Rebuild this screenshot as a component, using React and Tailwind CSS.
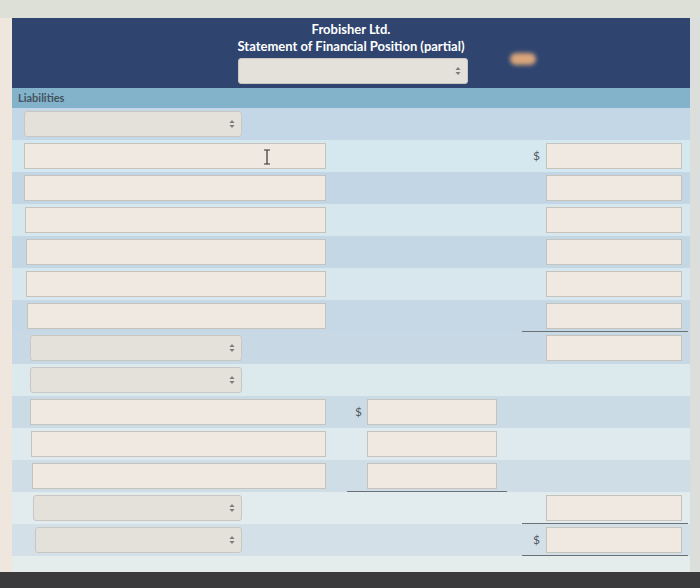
import React from "react";

const rows = [
  { bg: "bg-[#c3d7e6]", pl: "pl-[12px]", a: "select" },
  { bg: "bg-[#d5e7ef]", pl: "pl-[12px]", a: "input", c: { dollar: true }, cursor: true },
  { bg: "bg-[#c2d6e5]", pl: "pl-[12px]", a: "input", c: {} },
  { bg: "bg-[#d6e7ee]", pl: "pl-[13px]", a: "input", c: {} },
  { bg: "bg-[#c4d7e5]", pl: "pl-[14px]", a: "input", c: {} },
  { bg: "bg-[#d7e7ed]", pl: "pl-[14px]", a: "input", c: {} },
  { bg: "bg-[#c6d8e5]", pl: "pl-[15px]", a: "input", c: { line: true } },
  { bg: "bg-[#c8d9e5]", pl: "pl-[18px]", a: "select", c: {} },
  { bg: "bg-[#dce9ed]", pl: "pl-[18px]", a: "select" },
  { bg: "bg-[#cbdbe5]", pl: "pl-[18px]", a: "input", b: { dollar: true } },
  { bg: "bg-[#dfeaee]", pl: "pl-[19px]", a: "input", b: {} },
  { bg: "bg-[#cedde6]", pl: "pl-[20px]", a: "input", b: { line: true } },
  { bg: "bg-[#e2ecee]", pl: "pl-[21px]", a: "select", c: { line: true } },
  { bg: "bg-[#d3e0e8]", pl: "pl-[23px]", a: "select", c: { dollar: true, line: true } },
];

function Arrows() {
  return (
    <svg width="6" height="10" viewBox="0 0 6 10" className="shrink-0">
      <path d="M3 1 L5.5 4 L0.5 4 Z" fill="#7a7a7a" />
      <path d="M3 9 L5.5 6 L0.5 6 Z" fill="#7a7a7a" />
    </svg>
  );
}

function Select({ w = "flex-1" }) {
  return (
    <div
      className={`${w} h-[26px] rounded-[3px] border border-[#c9c7c2] bg-[#e4e0da] flex items-center justify-end pr-[6px]`}
    >
      <Arrows />
    </div>
  );
}

function Input({ w = "flex-1" }) {
  return <div className={`${w} h-[26px] border border-[#c6c3bd] bg-[#efe9e1]`} />;
}

function Dollar() {
  return <span className="text-[12px] text-[#555c62]">$</span>;
}

export default function App() {
  return (
    <div
      className="w-[700px] h-[588px] flex flex-col bg-[#dadfd6] overflow-hidden"
      style={{ fontFamily: "Lato, 'Open Sans', sans-serif" }}
    >
      <div className="h-[18px] bg-[#dde0d7]" />
      <div className="flex flex-1">
        <div className="w-[12px] bg-[#efe7dd]" />
        <div className="w-[678px] flex flex-col">
          {/* header */}
          <div className="relative h-[70px] bg-[#2f4570] flex flex-col items-center pt-[3px]">
            <div className="text-white font-bold text-[13px] leading-[17px]">Frobisher Ltd.</div>
            <div className="text-white font-bold text-[13px] leading-[17px]">
              Statement of Financial Position (partial)
            </div>
            <div className="mt-[3px] ml-[4px]">
              <Select w="w-[230px]" />
            </div>
            <div className="absolute left-[498px] top-[35px] w-[26px] h-[12px] rounded-full bg-[#d9a57a] blur-[2px]" />
          </div>

          {/* liabilities */}
          <div className="h-[20px] bg-[#82b3cb] flex items-center pl-[6px]">
            <span className="text-[11px] font-bold text-[#44525d]">Liabilities</span>
          </div>

          {rows.map((r, i) => (
            <div key={i} className={`relative h-[32px] flex ${r.bg}`}>
              <div className="w-[323px] flex items-center">
                <div className={`${r.a === "select" ? "w-[230px]" : "w-[314px]"} ${r.pl} flex`}>
                  {r.a === "select" ? <Select /> : <Input />}
                </div>
              </div>
              <div className="w-[185px] flex pl-[12px]">
                {r.b && (
                  <div
                    className={`w-[160px] h-full flex items-center justify-end gap-[5px] pr-[10px] ${
                      r.b.line ? "border-b-[1.5px] border-[#6b7075]" : ""
                    }`}
                  >
                    {r.b.dollar && <Dollar />}
                    <Input w="w-[130px]" />
                  </div>
                )}
              </div>
              <div className="flex-1 flex pl-[2px]">
                {r.c && (
                  <div
                    className={`w-[166px] h-full flex items-center justify-end gap-[6px] pr-[6px] ${
                      r.c.line ? "border-b-[1.5px] border-[#6b7075]" : ""
                    }`}
                  >
                    {r.c.dollar && <Dollar />}
                    <Input w="w-[136px]" />
                  </div>
                )}
              </div>
              {r.cursor && (
                <svg
                  width="8"
                  height="16"
                  viewBox="0 0 8 16"
                  className="absolute left-[251px] top-[9px]"
                >
                  <path d="M1 1 H7 M4 1 V15 M1 15 H7" stroke="#333" strokeWidth="1.2" fill="none" />
                </svg>
              )}
            </div>
          ))}
          <div className="flex-1 bg-[#e4ecec]" />
        </div>
        <div className="flex-1 bg-[#dcdedb]" />
      </div>
      <div className="h-[16px] bg-[#3b3b3d]" />
    </div>
  );
}
